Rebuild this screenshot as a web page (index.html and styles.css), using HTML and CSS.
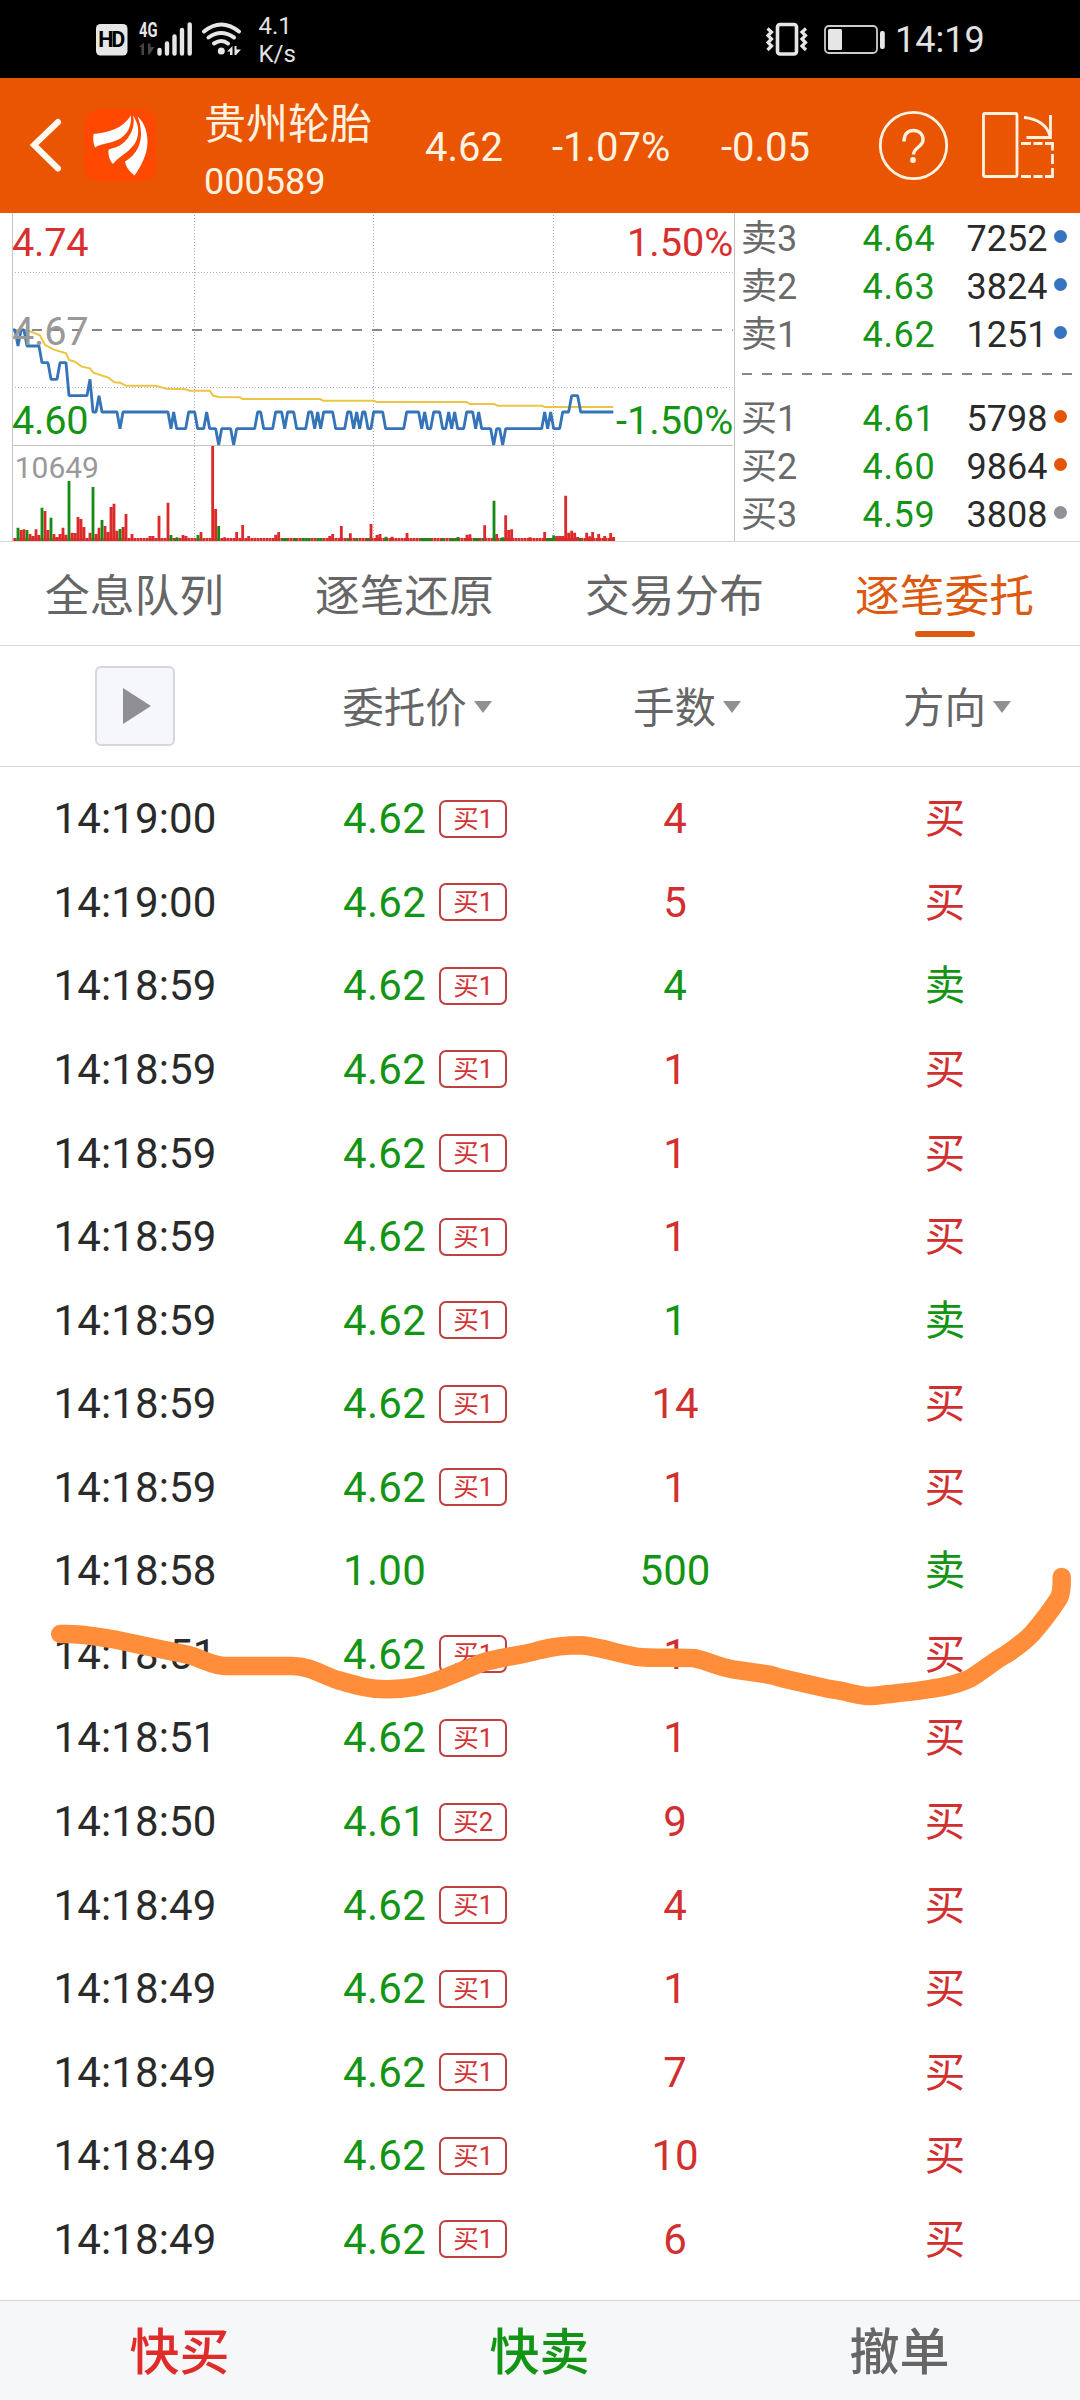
FILE: index.html
```html
<!DOCTYPE html>
<html lang="zh-CN">
<head>
<meta charset="utf-8">
<title>贵州轮胎 000589</title>
<link rel="stylesheet" href="styles.css">
</head>
<body>
<div class="status">
  <svg class="status-icons" width="160" height="78" viewBox="90 0 160 78">
    <rect x="96" y="24" width="31.500" height="31.500" rx="4.500" fill="#e6e6e6"/>
    <text x="98.200" y="47" class="hd" textLength="27">HD</text>
    <text x="139" y="37" class="net" textLength="18.500" lengthAdjust="spacingAndGlyphs">4G</text>
    <path d="M139 47l5-4.500V55h-2.600v-8zM148 43.500h2.500V47h4l-5 7.500H148z" fill="#444"/>
    <path d="M159.500 50v3.500M167 43.500v10M174.500 36.500v17M182 30v23.500M189.700 24.500v29" stroke="#e6e6e6" stroke-width="4.400" stroke-linecap="round"/>
    <g fill="none" stroke="#e6e6e6" stroke-width="4" stroke-linecap="round"><path d="M204 31.500q17-14 35 0M208.500 37.500q12.500-9 25.500 0M214 43.500q7.500-5 14 0"/></g>
    <circle cx="221.300" cy="51" r="3.500" fill="#e6e6e6"/>
    <path d="M227 51.500l5.500-5.500V55h-2.500v-3.500zM234.500 46h2v3.500h4.500L236 55h-1.500z" fill="#e6e6e6"/>
  </svg>
  <div class="speed">4.1<br>K/s</div>
  <svg class="device-icons" width="125" height="78" viewBox="762 0 125 78">
    <rect x="777.500" y="24.500" width="19" height="29.500" rx="2.500" fill="none" stroke="#e6e6e6" stroke-width="3.600"/>
    <path d="M767.500 28.500l4 3.500-3.500 3.500 3.500 3.500-3.500 3.500 3.500 3.500-4 4M806 28.500l-4 3.500 3.500 3.500-3.500 3.500 3.500 3.500-3.500 3.500 4 4" fill="none" stroke="#e6e6e6" stroke-width="3.200"/>
    <rect x="825" y="26" width="52" height="27" rx="4" fill="none" stroke="#ccc" stroke-width="1.800"/>
    <rect x="828" y="29" width="14" height="21" rx="1.500" fill="#e6e6e6"/>
    <rect x="880" y="31" width="4.800" height="18" rx="2" fill="#e6e6e6"/>
  </svg>
  <div class="clock">14:19</div>
</div>

<header class="head">
  <svg class="brand" width="136" height="135" viewBox="24 78 136 135">
    <path d="M58 122L34 145l24 23.500" fill="none" stroke="#fffaf0" stroke-width="6" stroke-linecap="round"/>
    <rect x="84.500" y="109.500" width="71.500" height="72" rx="15" fill="#ff4800"/>
    <g fill="#fff">
      <path d="M93.500 134C110 132 122 129 131 115.500C132 130 124 139 112 142C105 144 98 145 95 147.500C93 143 93 138 93.500 134Z"/>
      <path d="M133 115.500C136 126 130 138 122 144C117 148 111 148 108.500 150C108 156 110 161 113 164C122 153 136 150 138 134C139 126 136 120 133 115.500Z"/>
      <path d="M137.500 116.500C144 122 147.500 131 147.500 142C147.500 155 140 168 134.500 175.500C129 171 126 167 125 161.500C133 157 141 148 141 134C141 127 139.500 121 137.500 116.500Z"/>
    </g>
  </svg>
  <div class="stock"><div class="name">贵州轮胎</div><div class="code">000589</div></div>
  <div class="quote q-price">4.62</div>
  <div class="quote q-pct">-1.07%</div>
  <div class="quote q-chg">-0.05</div>
  <svg class="tools" width="180" height="135" viewBox="876 78 180 135">
    <g fill="none" stroke="#fff3e0" stroke-width="2.800">
      <circle cx="913.500" cy="145.500" r="33.200"/>
      <path d="M904 141.500c0-7.500 4-11 9.500-11s9.500 3.500 9.500 9.500c0 7-9.500 7.500-9.500 14.500" stroke-width="3.400"/>
      <rect x="983.500" y="113.500" width="33.500" height="63" rx="1.500"/>
      <path d="M1024 117.500c13 1 24 8 26 19M1050.500 115v22.500h-24" />
      <path d="M1021 143.500h10M1033.500 143.500h9M1045 143.500h7.500v7M1052.500 154v10M1052.500 168v8.500h-7.500M1042.500 176.500h-9M1031 176.500h-10"/>
    </g>
    <circle cx="913" cy="160" r="2.900" fill="#fff3e0"/>
  </svg>
</header>

<section class="market">
  <svg class="chart" width="736" height="328" viewBox="0 9 2208 984">
    <g fill="none" stroke="#c4c4c4" stroke-width="3">
      <path d="M37.500 9V996M2203.500 9V996M37 706.500H2198"/>
      <path d="M45 187.500H2198M45 532.500H2198M583.500 15V993M1120.500 15V993M1660.500 15V993" stroke="#b0b0b0" stroke-dasharray="3 6"/>
    </g>
    <path d="M96 360H2198" stroke="#888" stroke-width="6" stroke-dasharray="30 30"/>
    <path d="M40 988.500H1845" stroke="#dc2a2a" stroke-width="9" stroke-dasharray="8 1"/>
    <path d="M525 988.500h9M845 988.500h18M880 988.500h10M905 988.500h27M950 988.500h18M1040 988.500h9M1066 988.500h9M1100 988.500h9M1260 988.500h36M1325 988.500h9M1350 988.500h18M1420 988.500h18M1445 988.500h8M1500 988.500h9M1636 988.500h30M1736 988.500h9" stroke="#148c14" stroke-width="9" stroke-dasharray="8 1"/>
    <path d="M63 993V960M72 993V958M90 993V972M99 993V978M108 993V958M117 993V975M135 993V903M144 993V960M162 993V972M171 993V981M180 993V972M189 993V953M198 993V974M216 993V968M225 993V969M234 993V921M243 993V927M252 993V951M270 993V968M288 993V972M297 993V953M315 993V948M324 993V966M333 993V891M342 993V881M351 993V962M369 993V951M378 993V912M396 993V972M450 993V978M459 993V978M477 993V917M504 993V878M549 993V975M558 993V978M603 993V966M638 993V708M647 993V897M674 993V982M710 993V966M728 993V945M746 993V978M827 993V974M836 993V966M989 993V978M998 993V972M1024 993V948M1051 993V970M1113 993V942M1131 993V975M1140 993V972M1176 993V980M1221 993V969M1401 993V974M1410 993V973M1454 993V946M1490 993V972M1517 993V916M1526 993V960M1535 993V958M1590 993V982M1634 993V966M1670 993V978M1679 993V978M1688 993V978M1697 993V857M1706 993V968M1715 993V962M1724 993V968M1733 993V981M1760 993V968M1769 993V979M1778 993V966M1796 993V972M1814 993V978M1832 993V969M1841 993V981" stroke="#dc2a2a" stroke-width="8.500"/>
    <path d="M54 993V953M81 993V960M126 993V893M153 993V923M207 993V813M279 993V831M306 993V930M360 993V957M513 993V975M531 993V982M594 993V975M656 993V948M1158 993V980M1374 993V981M1482 993V872M1508 993V982M1661 993V976" stroke="#148c14" stroke-width="8.500"/>
    <polyline fill="none" stroke="#ecc544" stroke-width="6" points="39,360 81,360 120,376 135,405 160,418 198,430 207,450 225,455 245,470 270,475 280,488 310,498 325,503 343,517 360,518 378,527 467,527 500,536 557,538 568,542 630,542 638,556 655,561 720,562 727,567 960,567 970,572 1120,572 1130,576 1400,576 1410,582 1483,582 1492,587 1625,587 1634,591 1840,591"/>
    <polyline fill="none" stroke="#3574b9" stroke-width="8.500" points="39,360 45,360 54,408 63,360 72,360 81,408 117,408 126,458 144,458 153,508 171,508 180,458 198,458 207,557 261,557 270,508 279,606 288,606 297,557 306,606 351,606 360,656 369,606 504,606 513,656 521,606 530,656 557,656 566,606 584,606 593,656 611,656 620,606 629,656 647,656 656,705 665,656 692,656 701,705 710,656 764,656 773,606 782,606 791,656 818,656 827,606 845,606 854,656 863,606 881,606 890,656 917,656 926,606 935,606 944,656 953,606 962,656 971,606 998,606 1007,656 1034,656 1043,606 1052,606 1061,656 1070,606 1079,656 1088,606 1095,606 1104,656 1113,656 1121,606 1148,606 1157,656 1211,656 1220,606 1256,606 1265,656 1274,606 1283,656 1292,656 1301,606 1319,606 1328,656 1337,656 1346,606 1355,656 1364,606 1373,656 1391,656 1400,606 1418,606 1427,656 1436,606 1445,656 1472,656 1481,705 1490,656 1499,656 1508,705 1517,656 1625,656 1634,606 1643,656 1652,606 1661,656 1679,656 1688,606 1706,606 1715,557 1733,557 1742,606 1840,606" stroke-linejoin="bevel"/>
    <g class="axis">
      <text x="36" y="138" textLength="230" fill="#d83030">4.74</text>
      <text x="36" y="404" textLength="230" fill="#999">4.67</text>
      <text x="36" y="671" textLength="230" fill="#149414">4.60</text>
      <text x="2200" y="138" text-anchor="end" fill="#d83030">1.50%</text>
      <text x="2200" y="671" text-anchor="end" fill="#149414">-1.50%</text>
      <text x="44" y="803" class="vol" fill="#999">10649</text>
    </g>
  </svg>
  <div class="book">
    <div class="level"><span>卖3</span><b>4.64</b><i>7252</i><em class="blue"></em></div>
    <div class="level"><span>卖2</span><b>4.63</b><i>3824</i><em class="blue"></em></div>
    <div class="level"><span>卖1</span><b>4.62</b><i>1251</i><em class="blue"></em></div>
    <div class="split"></div>
    <div class="level"><span>买1</span><b>4.61</b><i>5798</i><em class="orange"></em></div>
    <div class="level"><span>买2</span><b>4.60</b><i>9864</i><em class="orange"></em></div>
    <div class="level"><span>买3</span><b>4.59</b><i>3808</i><em class="gray"></em></div>
  </div>
</section>

<nav class="tabs">
  <div class="tab">全息队列</div><div class="tab">逐笔还原</div><div class="tab">交易分布</div><div class="tab active">逐笔委托</div>
</nav>

<div class="columns">
  <div class="col"><div class="play"><svg width="30" height="38" viewBox="0 0 30 38"><path d="M1 1v36L29 19z" fill="#8f8f94"/></svg></div></div>
  <div class="col"><span class="sort">委托价</span></div>
  <div class="col"><span class="sort">手数</span></div>
  <div class="col"><span class="sort">方向</span></div>
</div>

<main class="orders">
  <div class="row buy"><span class="time">14:19:00</span><span class="price">4.62<u>买1</u></span><span class="qty">4</span><span class="side">买</span></div>
  <div class="row buy"><span class="time">14:19:00</span><span class="price">4.62<u>买1</u></span><span class="qty">5</span><span class="side">买</span></div>
  <div class="row sell"><span class="time">14:18:59</span><span class="price">4.62<u>买1</u></span><span class="qty">4</span><span class="side">卖</span></div>
  <div class="row buy"><span class="time">14:18:59</span><span class="price">4.62<u>买1</u></span><span class="qty">1</span><span class="side">买</span></div>
  <div class="row buy"><span class="time">14:18:59</span><span class="price">4.62<u>买1</u></span><span class="qty">1</span><span class="side">买</span></div>
  <div class="row buy"><span class="time">14:18:59</span><span class="price">4.62<u>买1</u></span><span class="qty">1</span><span class="side">买</span></div>
  <div class="row sell"><span class="time">14:18:59</span><span class="price">4.62<u>买1</u></span><span class="qty">1</span><span class="side">卖</span></div>
  <div class="row buy"><span class="time">14:18:59</span><span class="price">4.62<u>买1</u></span><span class="qty">14</span><span class="side">买</span></div>
  <div class="row buy"><span class="time">14:18:59</span><span class="price">4.62<u>买1</u></span><span class="qty">1</span><span class="side">买</span></div>
  <div class="row sell"><span class="time">14:18:58</span><span class="price">1.00</span><span class="qty">500</span><span class="side">卖</span></div>
  <div class="row buy"><span class="time">14:18:51</span><span class="price">4.62<u>买1</u></span><span class="qty">1</span><span class="side">买</span></div>
  <div class="row buy"><span class="time">14:18:51</span><span class="price">4.62<u>买1</u></span><span class="qty">1</span><span class="side">买</span></div>
  <div class="row buy"><span class="time">14:18:50</span><span class="price">4.61<u>买2</u></span><span class="qty">9</span><span class="side">买</span></div>
  <div class="row buy"><span class="time">14:18:49</span><span class="price">4.62<u>买1</u></span><span class="qty">4</span><span class="side">买</span></div>
  <div class="row buy"><span class="time">14:18:49</span><span class="price">4.62<u>买1</u></span><span class="qty">1</span><span class="side">买</span></div>
  <div class="row buy"><span class="time">14:18:49</span><span class="price">4.62<u>买1</u></span><span class="qty">7</span><span class="side">买</span></div>
  <div class="row buy"><span class="time">14:18:49</span><span class="price">4.62<u>买1</u></span><span class="qty">10</span><span class="side">买</span></div>
  <div class="row buy"><span class="time">14:18:49</span><span class="price">4.62<u>买1</u></span><span class="qty">6</span><span class="side">买</span></div>
  <svg class="marker" width="1080" height="160" viewBox="0 1550 1080 160">
    <path fill="none" stroke="#ff8d39" stroke-width="18.500" stroke-linecap="round" stroke-linejoin="round" d="M60.300 1634C84 1633 96 1637 113.600 1639.300L150 1647L189 1655C205 1660 213 1666 226 1666H292C310 1666 322 1675 337.500 1680C358 1686 370 1689.500 387.400 1689.300C408 1689 424 1686 441 1679.300L482 1662.700C500 1657 520 1656 540 1650C552 1647 566 1645.300 581 1645.300C600 1647 616 1653 636 1656.700C655 1659 680 1657 695 1658.300C710 1662 720 1667 733 1669.300L771 1675L781 1678L826 1688.300L840 1690.700C852 1693 860 1696 871 1696C888 1694 903 1693 919 1690.700C935 1688 955 1686 970.400 1678.300C984 1670 994 1661 1005 1655C1016 1648 1024 1642 1032.400 1633.300C1043 1621 1052 1609 1059 1598Q1062 1592 1061.700 1577"/>
  </svg>
</main>

<footer class="actions"><div class="red">快买</div><div class="green">快卖</div><div>撤单</div></footer>
</body>
</html>
```

FILE: styles.css
```css
* { box-sizing: border-box; }
body {
  margin: 0;
  width: 1080px;
  height: 2400px;
  display: flex;
  flex-direction: column;
  overflow: hidden;
  background: #fff;
  color: #2a2a2a;
  font-family: Roboto, "Noto Sans CJK SC", sans-serif;
}
svg { display: block; flex: none; }
b, i, em { font-style: normal; font-weight: 400; }

.status { height: 78px; flex: none; display: flex; background: #000; color: #e2e2e2; padding-left: 90px; }
.hd { font: 700 21.500px Roboto, sans-serif; fill: #000; }
.net { font: 700 20px Roboto, sans-serif; fill: #e6e6e6; }
.speed { width: 503px; padding: 12px 0 0 8.500px; font-size: 24px; line-height: 28px; margin-right: 9px; }
.clock { font-size: 36px; line-height: 78px; margin-left: 8px; padding-top: 1px; }

.head { height: 135px; flex: none; display: flex; background: #ea5504; color: #fff3e0; padding-left: 24px; }
.stock { width: 219px; margin-left: 44px; padding-top: 23px; }
.name { font-size: 42px; line-height: 48px; }
.code { font-size: 36px; line-height: 42px; margin-top: 12px; }
.quote { font-size: 40px; line-height: 140px; }
.q-price { width: 127px; padding-left: 2px; }
.q-pct { width: 170px; padding-left: 2px; }
.q-chg { width: 156px; padding-left: 1px; }

.market { height: 328px; flex: none; display: flex; }
.axis { font-family: Roboto, sans-serif; font-size: 119px; }
.vol { font-size: 90px; }
.book { width: 344px; padding: 2px 0 0 5px; }
.level { display: grid; grid-template-columns: 118px 91px 97.500px 1fr; height: 48px; line-height: 48px; align-items: center; font-size: 36px; }
.level span { color: #6a6a6a; font-size: 36px; }
.level b { color: #149414; padding-left: 3.500px; letter-spacing: 0.700px; }
.level i { text-align: right; }
.level em { width: 13px; height: 13px; border-radius: 50%; margin-left: 6.500px; margin-top: -5px; }
.blue { background: #3574c0; }
.orange { background: #e65505; }
.gray { background: #919198; }
.split { height: 2px; margin: 14px 6px 20px 1px; background: repeating-linear-gradient(90deg, #888 0 10px, transparent 10px 20px); }

.tabs { height: 105px; flex: none; display: grid; grid-template-columns: repeat(4, 1fr); border-top: 1px solid #d6d8da; border-bottom: 1px solid #d6d8da; color: #666; }
.tab { position: relative; text-align: center; font-size: 44.700px; line-height: 110px; height: 103px; padding-right: 1px; }
.active { color: #dc5a10; }
.active::after { content: ""; position: absolute; left: 104.500px; bottom: 8px; width: 60px; height: 6px; border-radius: 3px; background: #dc5a10; }

.columns { height: 121px; flex: none; display: grid; grid-template-columns: repeat(4, 1fr); border-bottom: 1px solid #d6d8da; color: #666; }
.col { display: flex; justify-content: center; align-items: center; font-size: 41.500px; padding-right: 1px; }
.play { width: 80px; height: 80px; display: flex; justify-content: center; align-items: center; padding-left: 5px; border: 2px solid #d5d7da; border-radius: 6px; background: #f6f7fa; }
.sort { position: relative; line-height: 60px; padding-top: 5px; }
.sort::after { content: ""; position: absolute; left: calc(100% + 7px); top: 27px; border: 9px solid transparent; border-top: 12px solid #8f8f94; border-bottom: 0; }

.orders { height: 1533px; flex: none; padding-top: 10px; position: relative; }
.row { height: 83.570px; display: grid; grid-template-columns: repeat(4, 1fr); align-items: center; text-align: center; font-size: 42px; }
.row .time { letter-spacing: 0.150px; }
.row .price { display: flex; align-items: center; padding-left: 73px; color: #149414; letter-spacing: 0.300px; }
.row u { width: 68px; height: 38px; margin-left: 13px; border: 2px solid #bf4040; border-radius: 7px; color: #d23434; font-size: 25.500px; line-height: 35px; text-decoration: none; letter-spacing: 0; }
.row .side { font-size: 40.500px; line-height: 48px; padding-top: 1px; }
.buy .qty, .buy .side { color: #d23030; }
.sell .qty, .sell .side { color: #149414; }
.marker { position: absolute; left: 0; top: 783px; }

.actions { height: 100px; flex: none; display: grid; grid-template-columns: repeat(3, 1fr); border-top: 1px solid #d2d6d8; background: #f6f7f9; color: #666; text-align: center; font-size: 50px; font-weight: 500; line-height: 105px; }
.actions div { height: 99px; padding-right: 1px; }
.red { color: #e02b2b; }
.green { color: #149414; }
```
